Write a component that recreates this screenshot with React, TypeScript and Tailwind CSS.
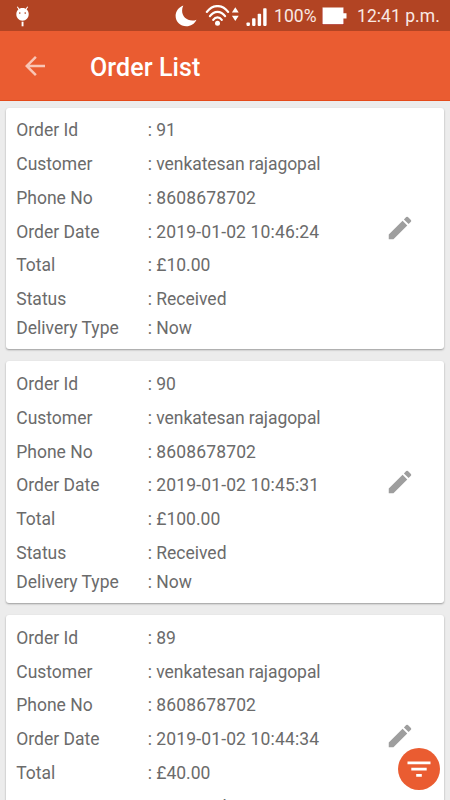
import React from "react";

interface Order {
    id: string;
    customer: string;
    phone: string;
    date: string;
    total: string;
    status: string;
    delivery: string;
}

const orders: Order[] = [
    {
        id: "91",
        customer: "venkatesan rajagopal",
        phone: "8608678702",
        date: "2019-01-02 10:46:24",
        total: "£10.00",
        status: "Received",
        delivery: "Now",
    },
    {
        id: "90",
        customer: "venkatesan rajagopal",
        phone: "8608678702",
        date: "2019-01-02 10:45:31",
        total: "£100.00",
        status: "Received",
        delivery: "Now",
    },
    {
        id: "89",
        customer: "venkatesan rajagopal",
        phone: "8608678702",
        date: "2019-01-02 10:44:34",
        total: "£40.00",
        status: "Received",
        delivery: "Now",
    },
];

function StatusBar() {
    return (
        <div className="flex h-[31px] shrink-0 items-center bg-[#b24423] text-[17.5px] text-[#f9e9e4]">
            {/* Debug notification */}
            <svg className="ml-[15px] h-[22px] w-[15px] shrink-0" viewBox="0 0 15 22" fill="white">
                <path d="M2.3 1.7 4.5 5M12.7 1.7 10.5 5" stroke="white" strokeWidth="1.1" />
                <path d="M7.5 2.9c3.8 0 6.2 2.7 6.2 6.2 0 4-2.6 6.6-6.2 6.6S1.3 13.1 1.3 9.1C1.3 5.6 3.7 2.9 7.5 2.9z" />
                <path d="M6.6 16.7h1.9v4.6H6.6z" />
                <circle cx="4.8" cy="8.1" r=".8" fill="#b24423" />
                <circle cx="10.2" cy="8.1" r=".8" fill="#b24423" />
            </svg>

            {/* Do not disturb moon */}
            <svg className="ml-[145px] h-[22px] w-[22px] shrink-0" viewBox="0 0 22 22" fill="white">
                <path d="M8.3.4C3.8 2 .6 6 .6 10.8c0 6 4.7 10.5 10.7 10.5 4.5 0 8.2-2.2 10.2-6.5-1.3.6-2.8.8-4.2.8-5.8 0-10.2-4.4-10.2-9.8 0-1.9.4-3.7 1.200-5.400z" />
            </svg>

            {/* Wifi with traffic arrows */}
            <svg className="ml-[8px] h-[22px] w-[35px] shrink-0" viewBox="0 0 35 22" fill="white">
                <g fill="none" stroke="white" strokeWidth="2.2" strokeLinecap="round">
                    <path d="M1.9 6.900C7.800-.900 17.200-.900 23.100 6.900" />
                    <path d="M4.900 11.100c4.300-5.700 10.900-5.700 15.200 0" />
                    <path d="M8.200 14.900c2.400-3.300 6.200-3.300 8.600 0" />
                </g>
                <circle cx="12.5" cy="18.2" r="2.500" />
                <path d="M26.900 7.400l3.400-5.200 3.400 5.200zM26.900 10.700l3.400 5.200 3.400-5.200z" />
            </svg>

            {/* Signal */}
            <svg className="ml-[6px] h-[22px] w-[22px] shrink-0" viewBox="0 0 22 22" fill="white">
                <rect x=".5" y="17.5" width="3.4" height="3.4" rx=".8" />
                <rect x="6.1" y="13.2" width="3.4" height="7.7" rx=".8" />
                <rect x="11.7" y="8.8" width="3.4" height="12.1" rx=".8" />
                <rect x="17.2" y="3.2" width="3.4" height="17.7" rx=".8" />
            </svg>

            <span className="ml-[6px] w-[43px] pt-[2px] tracking-[0.1px] whitespace-nowrap">100%</span>

            <svg className="ml-[5px] h-[18px] w-[25px] shrink-0" viewBox="0 0 25 18">
                <path d="M0 1h22v17H0z" fill="#a51b10" />
                <path d="M.5.5h21v5.700h3v5.300h-3v5.700H.5z" fill="white" />
            </svg>

            <span className="ml-[10px] pt-[2px] tracking-[0.05px] whitespace-nowrap">12:41 p.m.</span>
        </div>
    );
}

function Header() {
    return (
        <header className="flex h-[70px] shrink-0 items-center border-b border-[#e44a1a] bg-[#ea5c31]">
            <button className="ml-[20px]" aria-label="Back">
                <svg className="h-[30px] w-[30px]" viewBox="0 0 24 24" fill="#f9c5b5">
                    <path d="M20 11H7.83l5.59-5.59L12 4l-8 8 8 8 1.41-1.41L7.83 13H20v-2z" />
                </svg>
            </button>
            <h1 className="ml-[40px] pt-[5px] text-[25px] font-medium tracking-[0.1px] text-white">Order List</h1>
        </header>
    );
}

function OrderCard({ order }: { order: Order }) {
    const rows = [
        { label: "Order Id", value: order.id },
        { label: "Customer", value: order.customer, spacing: "tracking-[-0.06px]" },
        { label: "Phone No", value: order.phone, spacing: "tracking-[0.15px]" },
        { label: "Order Date", value: order.date, spacing: "tracking-[0.15px]" },
        { label: "Total", value: order.total },
        { label: "Status", value: order.status },
        { label: "Delivery Type", value: order.delivery },
    ];

    return (
        <div className="flex h-[241.25px] shrink-0 items-center rounded-[3px] bg-white shadow-[0_1px_2px_rgba(0,0,0,0.35)]">
            <div className="flex flex-1 flex-col self-start pt-[12.7px] pl-[10px]">
                {rows.map((row) => (
                    <div key={row.label} className="mb-[13.25px] flex h-[20.5px] items-center whitespace-nowrap last:mt-[-5px]">
                        <span className="w-[131.5px]">{row.label}</span>
                        <span className="w-[8.5px]">:</span>
                        <span className={row.spacing}>{row.value}</span>
                    </div>
                ))}
            </div>
            <button className="mr-[29px]" aria-label="Edit order">
                <svg className="h-[30px] w-[30px]" viewBox="0 0 24 24" fill="#9e9e9e">
                    <path d="M3 17.25V21h3.75L17.81 9.94l-3.75-3.75L3 17.25zM20.71 7.04a.996.996 0 0 0 0-1.41l-2.34-2.34a.996.996 0 0 0-1.41 0l-1.83 1.83 3.75 3.75 1.83-1.83z" />
                </svg>
            </button>
        </div>
    );
}

function App() {
    return (
        <div className="relative flex h-[800px] w-[450px] flex-col overflow-hidden bg-[#ececec] font-[Roboto,sans-serif]">
            <StatusBar />
            <Header />

            {/* Order list */}
            <main className="flex min-h-0 flex-1 flex-col gap-[12.5px] overflow-hidden px-[6.25px] pt-[6.5px] text-[17.5px] text-[#6b6b6b]">
                {orders.map((order) => (
                    <OrderCard key={order.id} order={order} />
                ))}
            </main>

            {/* Filter button */}
            <button
                className="absolute right-[10px] bottom-[10px] flex h-[42.5px] w-[42.5px] items-center justify-center rounded-full bg-[#ea5c31]"
                aria-label="Filter orders"
            >
                <svg className="h-[30px] w-[30px]" viewBox="0 0 30 30" fill="white">
                    <path d="M3.5 7.5h23v2.700h-23zM7.300 13.700h15.400v2.700H7.300zM12.200 20h5.600v2.700h-5.600z" />
                </svg>
            </button>
        </div>
    );
}

export default App;
